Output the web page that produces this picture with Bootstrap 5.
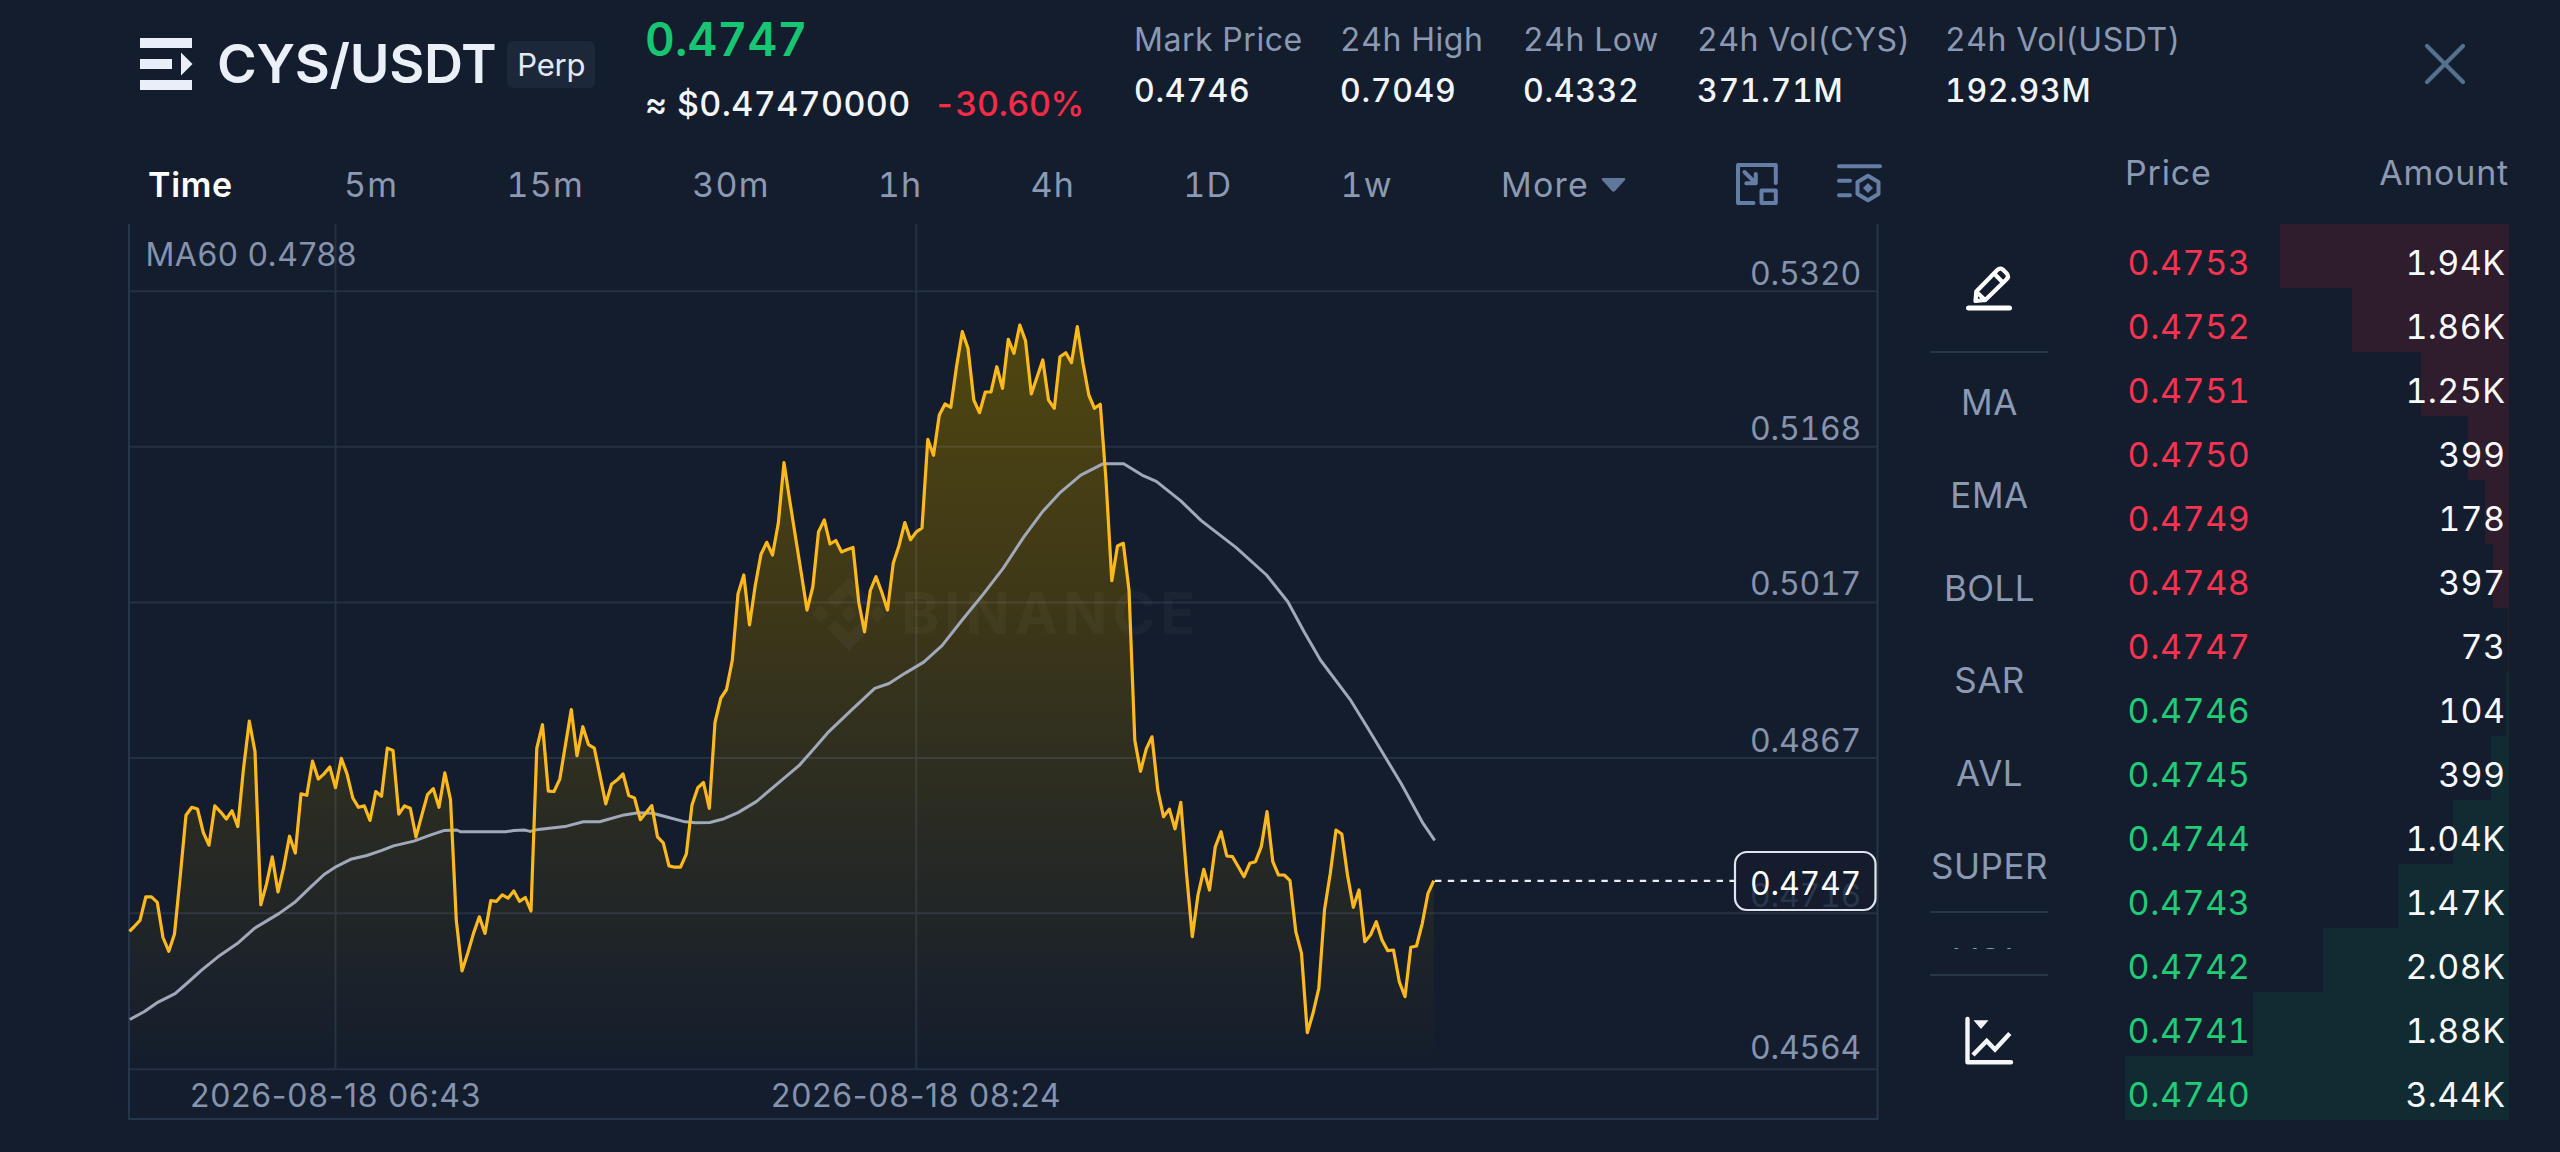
<!DOCTYPE html>
<html lang="en" data-bs-theme="dark">
<head>
<meta charset="utf-8">
<meta name="viewport" content="width=device-width, initial-scale=1">
<title>CYS/USDT Perp</title>
<link rel="stylesheet" href="https://cdn.jsdelivr.net/npm/bootstrap@5.3.0/dist/css/bootstrap.min.css">
<style>
:root{--bg:#141d2d;--muted:#8b99b2}
body{background:var(--bg);color:#f2f5fa;font-family:Inter,"Liberation Sans",sans-serif;width:2560px;height:1152px;overflow:hidden;font-variant-numeric:tabular-nums}
.topbar{height:150px;padding-left:140px}
.pair-box{width:505px;height:128px}
.pair-name{font-size:54px;font-weight:600;letter-spacing:-.3px;line-height:60px;margin-left:24px;color:#eaeff8}
.perp-tag{font-size:31px;line-height:47px;height:47px;width:88px;letter-spacing:-.2px;background:#1c2839;border-radius:6px;margin-left:11px;color:#e3e9f3}
.price-box{width:489px;padding-top:9px}
.last-price{font-size:46px;font-weight:600;line-height:60px;letter-spacing:.2px;color:#16c672}
.sub-line{font-size:34px;font-weight:500;line-height:44px;letter-spacing:.4px;margin-top:13px;gap:23px}
.sub-line .chg{color:#f42c48;letter-spacing:-.4px}
.stats{display:grid;grid-template-columns:206px 183px 174px 248px 249px;padding-top:17px}
.stats dt{font-size:32px;font-weight:400;line-height:45px;letter-spacing:.55px;color:var(--muted);white-space:nowrap}
.stats dd{font-size:32px;font-weight:500;line-height:57px;letter-spacing:.7px;margin:0}
.close-x{margin-left:229px;margin-top:42px}
.left-col{width:1750px;margin-left:129px}
.tabs{height:74px;padding-left:19px;font-size:34px;letter-spacing:1.2px;color:var(--muted);gap:108.2px;line-height:68px;white-space:nowrap}
.tabs button{all:unset;height:69px}
.tabs .on{color:#fff;font-weight:600;letter-spacing:.7px;margin-right:3px;line-height:66px}
.more-group{margin-right:-12px;height:69px}
.more-group svg{margin-left:12px}
.view-icons{margin:11px -2px 0 auto;overflow:visible}
.tools{width:118px;margin-left:51px;margin-top:74px}
.tool-cell{height:129px;width:118px}
.rule{border-bottom:2px solid #29364a}
.rule-gap{height:27px}
.ind-list{height:596px;overflow:hidden;font-size:35px;letter-spacing:.5px;color:var(--muted);padding:3px 0 0 1px}
.ind-list div{height:92.8px;line-height:92.8px}
.ind-list .sub{border-top:2px solid #29364a;margin:-2px 0 0 -1px;line-height:96px}
.book{width:384px;margin-left:77px;font-size:34px}
.book-head{height:74px;line-height:46px;color:var(--muted);letter-spacing:.8px}
.lvl{height:64px;line-height:51px;padding:13px 3.5px 0 2.5px;letter-spacing:.6px;color:#f7f9fc}
.lvl .amt{letter-spacing:.4px}
.lvl.ask{background:linear-gradient(#2f1c2d,#2f1c2d) no-repeat right/var(--d) 100%}
.lvl.bid{background:linear-gradient(#112b32,#112b32) no-repeat right/var(--d) 100%}
.ask .px{color:#f63350}.bid .px{color:#22cb78}
svg text{font-family:Inter,"Liberation Sans",sans-serif}
.prop-nums{font-variant-numeric:normal}
</style>
<script src="https://cdn.jsdelivr.net/npm/bootstrap@5.3.0/dist/js/bootstrap.bundle.min.js"></script>
</head>
<body>
<header class="topbar d-flex align-items-start">
  <div class="pair-box d-flex align-items-center">
    <svg width="53" height="52" viewBox="0 0 53 52" fill="#e9eef8"><path d="M0 0h52v10H0zM0 21h32v10H0zM0 42h52v10H0zM41 14.500 52.500 26 41 37.500z"/></svg>
    <div class="pair-name">CYS/USDT</div>
    <div class="perp-tag text-center">Perp</div>
  </div>
  <div class="price-box">
    <div class="last-price">0.4747</div>
    <div class="sub-line d-flex"><span>≈ $0.47470000</span><span class="chg">-30.60%</span></div>
  </div>
  <dl class="stats mb-0">
    <div><dt>Mark Price</dt><dd>0.4746</dd></div>
    <div><dt>24h High</dt><dd>0.7049</dd></div>
    <div><dt>24h Low</dt><dd>0.4332</dd></div>
    <div><dt>24h Vol(CYS)</dt><dd>371.71M</dd></div>
    <div><dt>24h Vol(USDT)</dt><dd>192.93M</dd></div>
  </dl>
  <svg class="close-x" width="44" height="44" viewBox="0 0 44 44" stroke="#56718f" stroke-width="4.200" stroke-linecap="round"><path d="M4 4 40 40M40 4 4 40"/></svg>
</header>

<main class="d-flex">
  <section class="left-col">
    <nav class="tabs d-flex">
      <button class="on">Time</button><button>5m</button><button>15m</button><button>30m</button><button>1h</button><button>4h</button><button>1D</button><button>1w</button>
      <div class="more-group d-flex align-items-center"><button>More</button><svg width="25" height="14" viewBox="0 0 25 14" fill="#5f779b"><path d="M2 0h21q2 0 1 2L14 13q-1.500 1.500-3 0L1 2Q0 0 2 0z"/></svg></div>
      <svg class="view-icons flex-shrink-0" width="146" height="46" viewBox="1735 161 146 46" fill="none" stroke="#647ea6" stroke-width="4" stroke-linecap="round" stroke-linejoin="round">
        <path d="M1775.800 183V165H1738v38h15.500M1761.500 190.500h14.300v12.600h-14.300zM1744.500 172l11 11M1755.800 174v9.200h-9.500"/>
        <path d="M1839 166.300h41M1839 180.700h11M1839 195.200h11M1868 175.800l10.500 6.100v12.200l-10.500 6.100-10.500-6.100v-12.200z"/>
        <path d="M1868 183l5 5-5 5-5-5z" fill="#647ea6" stroke="none"/>
      </svg>
    </nav>
    <svg id="chart" class="d-block overflow-visible" width="1750" height="896" viewBox="129 224 1750 896">
      <defs><linearGradient id="area" gradientUnits="userSpaceOnUse" x1="0" y1="325" x2="0" y2="1069"><stop offset="0" stop-color="#6e5c00" stop-opacity=".66"/><stop offset=".37" stop-color="#6e5600" stop-opacity=".47"/><stop offset=".585" stop-color="#6e5600" stop-opacity=".3"/><stop offset=".79" stop-color="#6e5a00" stop-opacity=".14"/><stop offset="1" stop-color="#6e5a00" stop-opacity="0"/></linearGradient></defs>
      <path id="fill" fill="url(#area)"/>
      <path d="M129 291.200H1878M129 446.800H1878M129 602.400H1878M129 758H1878M129 913.200H1878M129 1069.300H1878M335.500 224V1069M916.300 224V1069" stroke="#bcd2f5" stroke-opacity=".11" stroke-width="2" fill="none"/>
      <path d="M129 224V1119H1877.500V224" stroke="#27354a" stroke-width="2" fill="none"/>
      <g fill="#fff" fill-opacity=".032">
        <path d="M849 577.500l22 22-8.500 8.500-13.500-13.500-13.500 13.500-8.500-8.500zM849 605.500l8.500 8.500-8.500 8.500-8.500-8.500zM820.500 605.500l8.500 8.500-8.500 8.500-8.500-8.500zM877.500 605.500l8.500 8.500-8.500 8.500-8.500-8.500zM849 650.500l-22-22 8.500-8.500 13.500 13.500 13.500-13.500 8.500 8.500z"/>
        <text x="901" y="634" font-size="58" font-weight="700" letter-spacing="5">BINANCE</text>
      </g>
      <path id="ma" fill="none" stroke="#a0a8b9" stroke-width="3" stroke-linejoin="round"/>
      <path id="price" fill="none" stroke="#fdb91c" stroke-width="3.200" stroke-linejoin="round"/>
      <g font-size="32" fill="#8593ad" letter-spacing="-.2">
        <text class="prop-nums" x="145.500" y="265.500" letter-spacing=".45">MA60 0.4788</text>
        <text x="1750" y="284.500">0.5320</text>
        <text x="1750" y="440">0.5168</text>
        <text x="1750" y="595">0.5017</text>
        <text x="1750" y="752">0.4867</text>
        <text x="1750" y="1059">0.4564</text>
        <text class="prop-nums" x="190" y="1107" letter-spacing=".7">2026-08-18 06:43</text>
        <text class="prop-nums" x="771" y="1107" letter-spacing=".7">2026-08-18 08:24</text>
        <text x="1750" y="907" fill="#35435a">0.4716</text>
      </g>
      <path d="M1435 880.800H1734" stroke="#e8ecf4" stroke-width="2.200" stroke-dasharray="6.400 6.400"/>
      <rect x="1735" y="852" width="140.500" height="58" rx="12" fill="#141d2d" fill-opacity=".35" stroke="#dfe4ee" stroke-width="2.200"/>
      <text x="1750" y="894.500" font-size="32" fill="#fff" letter-spacing="-.2">0.4747</text>
    </svg>
  </section>

  <aside class="tools">
    <div class="tool-cell rule">
      <svg class="d-block" width="118" height="127" viewBox="1930 224 118 127" fill="none" stroke="#fff" stroke-width="4.200" stroke-linecap="round" stroke-linejoin="round"><path d="M1968.500 308H2009.500" stroke-width="5"/><path d="M1975.500 301l.8-9.500 21-21.500q2.500-2.500 5.500-.5l4 4q2.500 3-.2 5.700l-21.300 20.800zM1994 273.500l9.200 9.200M1976.500 292l8.500 8"/></svg>
    </div>
    <div class="ind-list text-center">
      <div>MA</div><div>EMA</div><div>BOLL</div><div>SAR</div><div>AVL</div><div>SUPER</div><div class="sub">VOL</div>
    </div>
    <div class="rule rule-gap"></div>
    <svg class="d-block" width="118" height="110" viewBox="1930 975.500 118 110" fill="none" stroke="#f4f6fb" stroke-width="4.400" stroke-linecap="round" stroke-linejoin="round"><path d="M1967.500 1018.500V1061.800H2011"/><path d="M1973 1054.500l13.700-14 8.300 8.500 14.800-16" stroke-linecap="butt" stroke-linejoin="miter"/><path d="M1973.500 1019.700h15l-7.500 8.800z" fill="#f4f6fb" stroke="none"/></svg>
  </aside>

  <section class="book">
    <div class="book-head d-flex justify-content-between"><span>Price</span><span>Amount</span></div>
    <div id="levels"></div>
  </section>
</main>

<script>
// order book: price, amount, depth width in px
const asks=[["0.4753","1.94K",229],["0.4752","1.86K",157],["0.4751","1.25K",88],["0.4750","399",41],["0.4749","178",24],["0.4748","397",16.5],["0.4747","73",1]];
const bids=[["0.4746","104",3.5],["0.4745","399",18],["0.4744","1.04K",56.5],["0.4743","1.47K",111],["0.4742","2.08K",186],["0.4741","1.88K",256.5],["0.4740","3.44K",384]];
const row=s=>([p,a,d])=>`<div class="lvl ${s} d-flex justify-content-between" style="--d:${d}px"><span class="px">${p}</span><span class="amt">${a}</span></div>`;
document.getElementById('levels').innerHTML=asks.map(row('ask')).join('')+bids.map(row('bid')).join('');

// one sample per minute, stored in blocks of [offset, unit, values]
const blocks=[
[600,.34438,[962,948,930,862,862,878,980,1020,970,800,625,602,607,675,712,598,615,636,612,658,490,352,440,885,825,746,848,775,686,735,563,567,468,520,505,485,545,460,505,575,602,598,640,556,570,430,437,622,598,605,688,625,565,548,602,502,580,930,1077,1025,968,920,968,873,875,856,866,845,875,864,903,430,362,555,556,520,420,318,452,368,420,430,510,592,535,522,505,568,575,638,618,597,688,705,772,776,776,738,595,545,530,605,355,285,260,175]],
[420,.34438,[505,450,595,480,390,355,392,300,124,235,340,445,552,485,325,290,360,350,383,376,370,530,615,495,455,500,552,415,365,298,348,325]],
[300,1/3,[684,418,466,345,312,322,200,95,145,300,338,276,276,200,265,118,160,75,122,282,232,180,300,325,170,158,188,80,190,285,325,313,540,842,738,730,870]],
[420,.34438,[930,1020,955,920,1075,1152,1130,1187,1110]],
[660,1/3,[640,830,705,628,690,560,515,588,590,620,650,610,605,560,455,605,645,645,662,815,880,1118,1060,985,750,640,510,522,645,742,690,845,825,785,840,872,870,965,1010,862,858,790,700,662]]];
const ys=blocks.flatMap(([o,u,v])=>v.map(y=>o+y*u));
const line=ys.map((y,i)=>(128.5+5.75*i+(i?0:1)).toFixed(1)+' '+y.toFixed(1)).join('L');
document.getElementById('price').setAttribute('d','M'+line);
document.getElementById('fill').setAttribute('d','M'+line+'V1069H129.5Z');

// moving average: [x offset, y offset, x unit, y unit, points]
const ma=[
[120,600,1/2.45,.34438,[24,1218,60,1195,90,1170,135,1143,165,1112,200,1075,240,1036,290,995,330,953,390,910,430,876,465,836,500,797,530,774,565,753,605,742,640,728,670,714,720,700,760,683,795,669,825,668,835,673,945,673,965,669,990,668,1005,672,1025,666,1090,658,1135,644,1175,644,1235,624,1270,618,1305,619,1340,630,1380,643,1410,647,1445,646,1480,635]],
[640,420,1/2.45,.34438,[240,1140,285,1108,335,1058,390,1003,425,956,460,908,520,840,575,779,610,765,650,735,695,703,740,655,790,580,840,507,890,430,940,340,985,268,1030,210,1080,160,1135,127,1185,127,1230,160,1265,178,1325,235,1375,292,1460,370,1535,450]],
[900,300,1/2.45,1/3,[950,905,990,995,1030,1080]],
[1100,660,1/1.96,1/3,[490,118,525,205,590,370,632,487,656,541]]];
const pts=ma.flatMap(([ox,oy,ux,uy,v])=>{const r=[];for(let i=0;i<v.length;i+=2)r.push([ox+v[i]*ux,oy+v[i+1]*uy]);return r});
document.getElementById('ma').setAttribute('d','M'+pts.map(p=>p[0].toFixed(1)+' '+p[1].toFixed(1)).join('L'));
</script>
</body>
</html>
